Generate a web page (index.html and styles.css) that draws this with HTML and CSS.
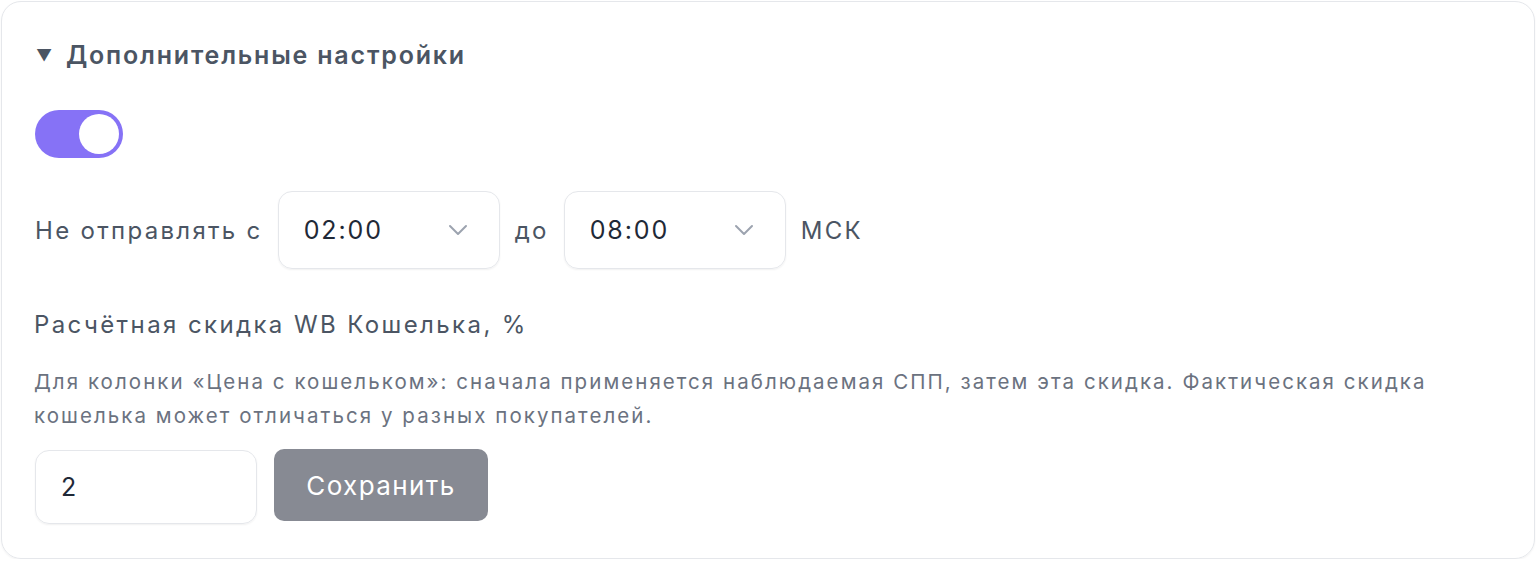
FILE: index.html
```html
<!DOCTYPE html>
<html lang="ru">
<head>
<meta charset="utf-8">
<link rel="stylesheet" href="styles.css">
</head>
<body>
<div class="card">
  <div class="head">
    <span class="tri">&#9660;</span>
    <span class="title">Дополнительные настройки</span>
  </div>
  <div class="toggle"><div class="knob"></div></div>
  <div class="row">
    <span class="lbl">Не отправлять с</span>
    <div class="select"><span>02:00</span>
      <svg class="chev" width="20" height="12" viewBox="0 0 20 12"><path d="M2 2 L10 10 L18 2" fill="none" stroke="#9ca3af" stroke-width="2" stroke-linecap="round" stroke-linejoin="round"/></svg>
    </div>
    <span class="lbl">до</span>
    <div class="select"><span>08:00</span>
      <svg class="chev" width="20" height="12" viewBox="0 0 20 12"><path d="M2 2 L10 10 L18 2" fill="none" stroke="#9ca3af" stroke-width="2" stroke-linecap="round" stroke-linejoin="round"/></svg>
    </div>
    <span class="lbl">МСК</span>
  </div>
  <div class="field-label">Расчётная скидка WB Кошелька, %</div>
  <p class="desc">Для колонки «Цена с кошельком»: сначала применяется наблюдаемая СПП, затем эта скидка. Фактическая скидка кошелька может отличаться у разных покупателей.</p>
  <div class="save-row">
    <div class="input">2</div>
    <div class="btn">Сохранить</div>
  </div>
</div>
</body>
</html>
```

FILE: styles.css
```css
* { box-sizing: border-box; }
html, body { margin: 0; padding: 0; background: #ffffff; }
body { font-family: Inter, "Noto Sans", sans-serif; }
.card {
  margin: 1px 1px 0 1px;
  height: 558px;
  border: 1px solid #e5e7eb;
  border-radius: 20px;
  box-shadow: 0 1px 2px rgba(0,0,0,0.05);
  padding: 32px 32px 0 32px;
}
.head { display: flex; align-items: center; gap: 14px; height: 42px; padding-left: 2px; }
.tri { font-size: 16px; color: #4b5563; width: 16px; display: inline-block; }
.title { font-size: 25px; font-weight: 600; color: #4b5563; letter-spacing: 1.8px; }
.toggle {
  margin-top: 34px; margin-left: 1px;
  width: 88px; height: 48px; border-radius: 24px;
  background: #8672f6; padding: 4px 4px 4px 44px;
}
.knob { width: 40px; height: 40px; border-radius: 50%; background: #fff; }
.row { display: flex; align-items: center; gap: 15px; margin-top: 33px; padding-left: 1px; }
.lbl { font-size: 24px; color: #4b5563; letter-spacing: 2.3px; }
.select {
  width: 222px; height: 78px; border: 1px solid #e5e7eb; border-radius: 14px;
  box-shadow: 0 1px 2px rgba(0,0,0,0.06);
  display: flex; align-items: center; justify-content: space-between;
  padding: 0 31px 0 25px; font-size: 25px; color: #1f2937; letter-spacing: 1.9px;
}
.field-label { margin-top: 39px; font-size: 24px; color: #4b5563; line-height: 34px; letter-spacing: 2.4px; }
.desc { margin: 23px 0 0 0; font-size: 20.5px; line-height: 34px; color: #6b7280; letter-spacing: 2.05px; padding-right: 40px; }
.save-row { display: flex; gap: 17px; margin-top: 17px; align-items: flex-start; padding-left: 1px; }
.input {
  width: 222px; height: 74px; border: 1px solid #e5e7eb; border-radius: 14px;
  box-shadow: 0 1px 2px rgba(0,0,0,0.06);
  display: flex; align-items: center; padding-left: 25px; font-size: 25px; color: #1f2937;
}
.btn {
  width: 214px; height: 72px; margin-top: -1px; border-radius: 10px; background: #878a93;
  color: #fff; font-size: 26px; letter-spacing: 1.4px; display: flex; align-items: center; justify-content: center;
}
```
